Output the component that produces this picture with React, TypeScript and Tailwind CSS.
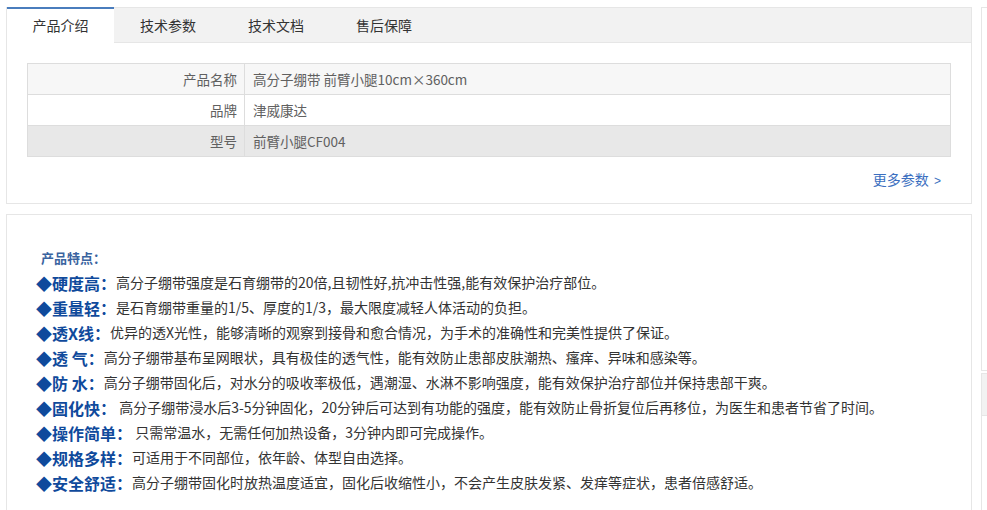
import React, { useState } from "react";

const tabs = ["产品介绍", "技术参数", "技术文档", "售后保障"];

const params = [
  { label: "产品名称", value: "高分子绷带 前臂小腿10cm×360cm", bg: "bg-[#f7f7f7]" },
  { label: "品牌", value: "津威康达", bg: "bg-white" },
  { label: "型号", value: "前臂小腿CF004", bg: "bg-[#e8e8e8]" },
];

const features = [
  { title: "硬度高：", text: "高分子绷带强度是石育绷带的20倍,且韧性好,抗冲击性强,能有效保护治疗部位。" },
  { title: "重量轻：", text: "是石育绷带重量的1/5、厚度的1/3，最大限度减轻人体活动的负担。" },
  { title: "透X线：", text: "优异的透X光性，能够清晰的观察到接骨和愈合情况，为手术的准确性和完美性提供了保证。" },
  { title: "透 气：", text: "高分子绷带基布呈网眼状，具有极佳的透气性，能有效防止患部皮肤潮热、瘙痒、异味和感染等。" },
  { title: "防 水：", text: "高分子绷带固化后，对水分的吸收率极低，遇潮湿、水淋不影响强度，能有效保护治疗部位并保持患部干爽。" },
  { title: "固化快：", text: " 高分子绷带浸水后3-5分钟固化，20分钟后可达到有功能的强度，能有效防止骨折复位后再移位，为医生和患者节省了时间。" },
  { title: "操作简单：", text: " 只需常温水，无需任何加热设备，3分钟内即可完成操作。" },
  { title: "规格多样：", text: "可适用于不同部位，依年龄、体型自由选择。" },
  { title: "安全舒适：", text: "高分子绷带固化时放热温度适宜，固化后收缩性小，不会产生皮肤发紧、发痒等症状，患者倍感舒适。" },
];

const font = "font-['Noto_Sans_CJK_SC','Noto_Sans',sans-serif]";

const App = () => {
  const [active, setActive] = useState(0);

  return (
    <div className={`h-[510px] w-[987px] overflow-hidden bg-white ${font}`}>
      <div className="flex gap-[9px] pl-[6px] pt-[7px]">
        {/* left column */}
        <div className="flex w-[966px] shrink-0 flex-col gap-[10px]">
          <div className="border border-t-0 border-[#e6e6e6] pb-[12px]">
            <div className="flex h-[36px] border-t border-b border-[#e6e6e6] bg-[#f2f2f2]">
              {tabs.map((t, i) => (
                <button
                  key={t}
                  onClick={() => setActive(i)}
                  className={
                    i === active
                      ? "-mb-px -mt-px w-[107px] border-t-2 border-[#4a7dbd] bg-white pb-[2px] text-[14px] text-[#333]"
                      : "w-[108px] text-[14px] text-[#333]"
                  }
                >
                  {t}
                </button>
              ))}
            </div>

            <div className="mx-[20px] mt-[20px] border border-[#dddddd] border-b-0">
              {params.map((p) => (
                <div key={p.label} className={`flex h-[31px] border-b border-[#dddddd] text-[13.5px] text-[#606060] ${p.bg}`}>
                  <div className="flex w-[217px] items-center justify-end border-r border-[#dddddd] pr-[7px]">
                    {p.label}
                  </div>
                  <div className="flex items-center pl-[8px]">{p.value}</div>
                </div>
              ))}
            </div>

            <div className="mr-[30px] mt-[11px] flex h-[23px] items-center justify-end text-[14px] text-[#3b6fc0]">
              <span>
                更多参数 <span className="ml-[2px] font-['Liberation_Sans',sans-serif] text-[12px]">&gt;</span>
              </span>
            </div>
          </div>

          <div className="h-[320px] border border-[#e6e6e6] pl-[29px] pt-[30px]">
            <div className="pl-[5px] text-[13px] font-bold leading-[25px] text-[#3a64a0]">产品特点：</div>
            {features.map((f) => (
              <div key={f.title} className="flex h-[25px] items-center whitespace-pre">
                <span className="text-[16px] font-bold text-[#0f4a9c]">◆{f.title}</span>
                <span className="text-[14px] text-[#333]">{f.text}</span>
              </div>
            ))}
          </div>
        </div>

        {/* right column */}
        <div className="flex w-[200px] shrink-0 flex-col gap-[2px]">
          <div className="h-[364px] border border-[#e6e6e6]"></div>
          <div className="h-[200px] border border-[#e6e6e6]">
            <div className="h-[42px] border-b border-[#e6e6e6] bg-[#f2f2f2]"></div>
          </div>
        </div>
      </div>
    </div>
  );
};

export default App;
